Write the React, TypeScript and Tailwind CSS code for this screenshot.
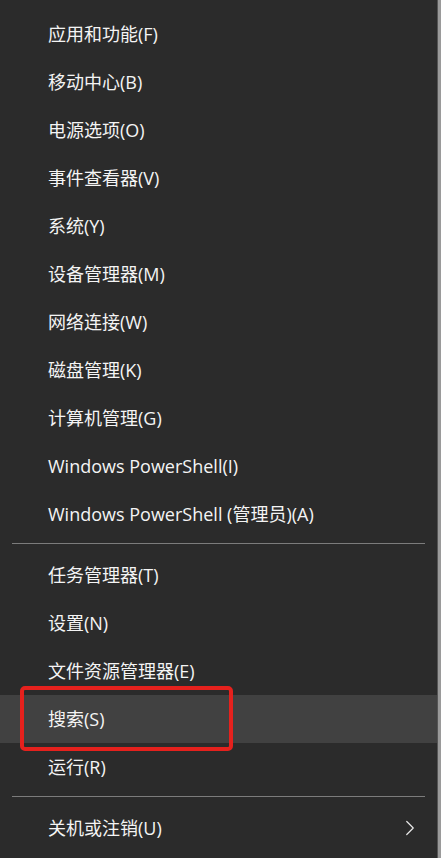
import { ChevronRight } from "lucide-react";

const GROUP_A = [
  "应用和功能(F)",
  "移动中心(B)",
  "电源选项(O)",
  "事件查看器(V)",
  "系统(Y)",
  "设备管理器(M)",
  "网络连接(W)",
  "磁盘管理(K)",
  "计算机管理(G)",
  "Windows PowerShell(I)",
  "Windows PowerShell (管理员)(A)",
];

const GROUP_B = ["任务管理器(T)", "设置(N)", "文件资源管理器(E)", "搜索(S)", "运行(R)"];

function Item({ label, active, arrow }: { label: string; active?: boolean; arrow?: boolean }) {
  return (
    <div
      className={`relative flex h-[48px] items-center justify-between pl-[48px] pr-[14px] ${
        active ? "bg-[#414141]" : ""
      }`}
    >
      <span className="-mt-[1px] text-[18px] leading-none text-[#f4f4f4]">{label}</span>
      {arrow && <ChevronRight className="size-[26px] text-[#e8e8e8]" strokeWidth={1.1} />}
      {active && (
        <div className="absolute left-[20px] top-[-9px] h-[65px] w-[213px] rounded-[5px] border-[4px] border-[#e5211d]" />
      )}
    </div>
  );
}

function Separator() {
  return <div className="mx-[12px] mt-[5px] mb-[7px] h-px bg-[#7c7c7c]" />;
}

export default function App() {
  return (
    <div
      className="flex h-[858px] w-[441px] bg-[#2b2b2b]"
      style={{ fontFamily: '"Open Sans", "Noto Sans CJK SC", sans-serif' }}
    >
      <div className="flex-1 pt-[10px]">
        {GROUP_A.map((l) => (
          <Item key={l} label={l} />
        ))}
        <Separator />
        {GROUP_B.map((l) => (
          <Item key={l} label={l} active={l === "搜索(S)"} />
        ))}
        <Separator />
        <Item label="关机或注销(U)" arrow />
      </div>
      <div className="w-[1px] bg-[#555555]" />
      <div className="w-[3px] bg-[#9a9a9a]" />
    </div>
  );
}
